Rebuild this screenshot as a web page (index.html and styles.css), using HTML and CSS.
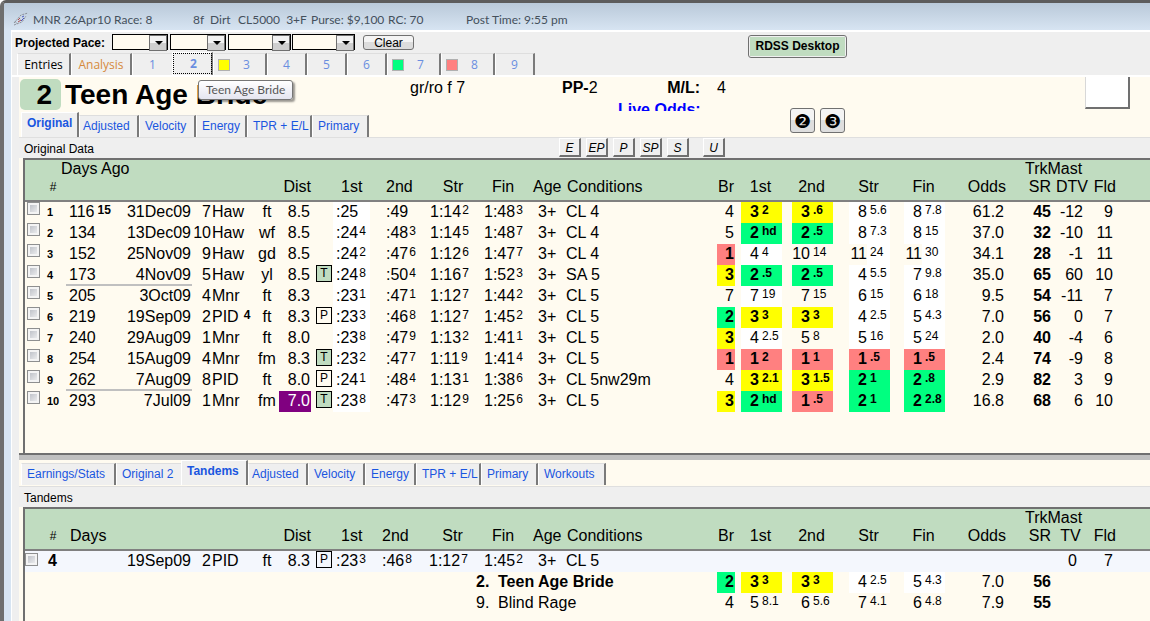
FILE: index.html
```html
<!DOCTYPE html>
<html lang="en">

<head>
  <meta charset="UTF-8">
  <meta name="viewport" content="width=device-width, initial-scale=1.0">
  <title>MNR 26Apr10 Race: 8</title>
  <link rel="stylesheet" href="styles.css">
</head>

<body>

  <div class="window">
    <header class="titlebar">
      <svg width="16" height="14" viewBox="0 0 16 14" fill="none">
        <path d="M1 11 L8 3 L15 1 M1 13 L9 10 L13 4 M2 9 L4 12" stroke="#8a8f98" stroke-dasharray="2 1" />
        <path d="M5 8 L7 6 M5 10 L8 8" stroke="#b04848" />
        <path d="M9 5 L11 4 M8 9 L11 6" stroke="#4a58c0" />
      </svg>
      <span class="race">MNR 26Apr10 Race: 8</span>
      <span class="dist">8f&nbsp; Dirt</span>
      <span class="class">CL5000&nbsp; 3+F</span>
      <span class="purse">Purse: $9,100</span>
      <span class="rc">RC: 70</span>
      <span>Post Time: 9:55 pm</span>
    </header>

    <main class="client">
      <div class="toolbar">
        <label for="pace1">Projected Pace:</label>
        <span class="pick"><select id="pace1"><option></option></select></span>
        <span class="pick"><select aria-label="Pace 2"><option></option></select></span>
        <span class="pick wide"><select aria-label="Pace 3"><option></option></select></span>
        <span class="pick wide"><select aria-label="Pace 4"><option></option></select></span>
        <button class="clear">Clear</button>
        <button class="desktop"><span>RDSS Desktop</span></button>
      </div>

      <nav class="tabs race-tabs">
        <button class="tab entries">Entries</button>
        <button class="tab analysis">Analysis</button>
        <button class="tab before">1</button>
        <div class="tip-anchor">
          <button class="tab active">2</button>
          <div class="tooltip">Teen Age Bride</div>
        </div>
        <button class="tab marked"><i class="yellow"></i>3</button>
        <button class="tab">4</button>
        <button class="tab">5</button>
        <button class="tab">6</button>
        <button class="tab marked"><i class="green"></i>7</button>
        <button class="tab marked"><i class="red"></i>8</button>
        <button class="tab">9</button>
      </nav>

      <div class="page">
        <section class="horse">
          <div class="identity">
            <h1><span class="program">2</span>Teen Age Bride</h1>
            <nav class="tabs">
              <button class="tab w-original active">Original</button>
              <button class="tab w-adjusted">Adjusted</button>
              <button class="tab w-velocity">Velocity</button>
              <button class="tab w-energy">Energy</button>
              <button class="tab w-tpr">TPR + E/L</button>
              <button class="tab w-primary">Primary</button>
            </nav>
          </div>
          <div class="facts">
            <span>gr/ro f 7</span>
            <span><b>PP-</b>2</span>
            <b class="ml">M/L:</b>
            <span class="value">4</span>
            <b class="live">Live Odds:</b>
          </div>
          <div class="lines">
            <button>❷</button>
            <button>❸</button>
          </div>
          <div class="silks"></div>
        </section>

        <div class="strip">
          <span class="name">Original Data</span>
          <button>E</button>
          <button>EP</button>
          <button>P</button>
          <button>SP</button>
          <button>S</button>
          <button class="unknown">U</button>
        </div>

        <div class="frame upper">
          <table>
            <colgroup>
              <col class="c-check"><col class="c-num"><col class="c-days"><col class="c-date"><col class="c-race">
              <col class="c-track"><col class="c-cond"><col class="c-dist"><col class="c-flag"><col class="c-t1">
              <col class="c-t2"><col class="c-t3"><col class="c-t4"><col class="c-age"><col class="c-class">
              <col class="c-br"><col class="c-p1"><col class="c-p2"><col class="c-p3"><col class="c-p4">
              <col class="c-odds"><col class="c-sr"><col class="c-dtv"><col class="c-fld"><col>
            </colgroup>
            <thead>
              <tr class="top">
                <th></th>
                <th colspan="3" class="ago">Days Ago</th>
                <th colspan="17"></th>
                <th colspan="2" class="trk">TrkMast</th>
                <th colspan="2"></th>
              </tr>
              <tr class="names">
                <th></th>
                <th class="hash">#</th>
                <th></th>
                <th></th>
                <th></th>
                <th></th>
                <th></th>
                <th class="right">Dist</th>
                <th></th>
                <th class="t1">1st</th>
                <th class="t2">2nd</th>
                <th>Str</th>
                <th>Fin</th>
                <th class="age">Age</th>
                <th class="class">Conditions</th>
                <th class="br">Br</th>
                <th><span>1st</span></th>
                <th><span>2nd</span></th>
                <th><span>Str</span></th>
                <th><span>Fin</span></th>
                <th class="right">Odds</th>
                <th class="sr">SR</th>
                <th class="right">DTV</th>
                <th class="right">Fld</th>
                <th></th>
              </tr>
            </thead>
            <tbody id="originalRows"></tbody>
          </table>
        </div>

        <div class="splitter"></div>

        <nav class="tabs lower-tabs">
          <button class="tab w-earnings">Earnings/Stats</button>
          <button class="tab w-tpr before">Original 2</button>
          <button class="tab w-tandems active">Tandems</button>
          <button class="tab w-adjusted">Adjusted</button>
          <button class="tab w-velocity">Velocity</button>
          <button class="tab w-energy">Energy</button>
          <button class="tab w-tpr">TPR + E/L</button>
          <button class="tab w-primary">Primary</button>
          <button class="tab w-workouts">Workouts</button>
        </nav>

        <div class="strip">
          <span class="name">Tandems</span>
        </div>

        <div class="frame lower">
          <table>
            <colgroup>
              <col class="c-check"><col class="c-num"><col class="c-days"><col class="c-date"><col class="c-race">
              <col class="c-track"><col class="c-cond"><col class="c-dist"><col class="c-flag"><col class="c-t1">
              <col class="c-t2"><col class="c-t3"><col class="c-t4"><col class="c-age"><col class="c-class">
              <col class="c-br"><col class="c-p1"><col class="c-p2"><col class="c-p3"><col class="c-p4">
              <col class="c-odds"><col class="c-sr"><col class="c-dtv"><col class="c-fld"><col>
            </colgroup>
            <thead>
              <tr class="top">
                <th colspan="21"></th>
                <th colspan="2" class="trk">TrkMast</th>
                <th colspan="2"></th>
              </tr>
              <tr class="names">
                <th></th>
                <th class="hash">#</th>
                <th class="days">Days</th>
                <th></th>
                <th></th>
                <th></th>
                <th></th>
                <th class="right">Dist</th>
                <th></th>
                <th class="t1">1st</th>
                <th class="t2">2nd</th>
                <th>Str</th>
                <th>Fin</th>
                <th class="age">Age</th>
                <th class="class">Conditions</th>
                <th class="br">Br</th>
                <th><span>1st</span></th>
                <th><span>2nd</span></th>
                <th><span>Str</span></th>
                <th><span>Fin</span></th>
                <th class="right">Odds</th>
                <th class="sr">SR</th>
                <th>TV</th>
                <th class="right">Fld</th>
                <th></th>
              </tr>
            </thead>
            <tbody id="tandemRows"></tbody>
          </table>
        </div>
      </div>
    </main>
  </div>

  <script src="script.js"></script>

</body>

</html>
```

FILE: styles.css
```css
* {
  box-sizing: border-box;
}

body {
  margin: 0;
  font-family: "Liberation Sans", Arial, sans-serif;
  font-size: 16px;
  color: #000;
}

button {
  font-family: inherit;
  font-size: 12px;
  padding: 0;
  margin: 0;
  color: #000;
}

/* window frame */

.window {
  display: flex;
  flex-direction: column;
  height: 100vh;
  overflow: hidden;
  border-top: 3px solid #5c5c5c;
  border-left: 4px solid #6e6e6e;
  border-top-left-radius: 6px;
  background: #d7e4f2;
}

.titlebar {
  display: flex;
  align-items: center;
  flex: none;
  height: 27px;
  padding: 5px 0 0 9px;
  background: linear-gradient(#b9c9d9, #d7e4f2);
  font-family: Lato, "Open Sans", sans-serif;
  font-size: 12px;
  color: #44505c;
  white-space: nowrap;
}

.race {
  width: 160px;
  margin-left: 4px;
}

.titlebar .dist {
  width: 45px;
}

.titlebar .class {
  width: 73px;
}

.purse {
  width: 77px;
}

.rc {
  width: 78px;
}

.client {
  display: flex;
  flex-direction: column;
  flex: 1;
  min-height: 0;
  margin-left: 7px;
  border-top: 2px solid #fff;
  border-left: 1px solid #fff;
  background: #efefef;
}

/* toolbar */

.toolbar {
  display: flex;
  align-items: flex-start;
  flex: none;
  height: 20px;
  padding: 2px 0 0 3px;
}

.toolbar label {
  width: 97px;
  font-size: 12px;
  font-weight: bold;
  line-height: 18px;
}

.pick {
  position: relative;
  width: 56px;
  height: 16px;
  margin-right: 2px;
}

.pick.wide {
  width: 63px;
  margin-right: 1px;
}

.pick select {
  display: block;
  width: 100%;
  height: 16px;
  border: 1px solid #000;
  border-radius: 0;
  background: #fffbf0;
  appearance: none;
}

.pick::before {
  content: "";
  position: absolute;
  top: 1px;
  right: 1px;
  width: 16px;
  height: 14px;
  border: 1px solid #707070;
  background: linear-gradient(#f2f2f2 50%, #cfcfcf 50%);
  pointer-events: none;
}

.pick::after {
  content: "";
  position: absolute;
  top: 7px;
  right: 5px;
  border: 4px solid transparent;
  border-top-color: #000;
  border-bottom: none;
  pointer-events: none;
}

.clear {
  width: 51px;
  height: 15px;
  margin: 1px 0 0 7px;
  border: 1px solid #707070;
  border-radius: 3px;
  background: linear-gradient(#f4f4f4 50%, #dcdcdc 50%);
  line-height: 14px;
}

.desktop {
  width: 99px;
  height: 23px;
  margin: 1px 0 0 334px;
  padding: 1px;
  border: 1px solid #707070;
  border-radius: 3px;
  background: #f0f0f0;
  font-weight: bold;
}

.desktop span {
  display: block;
  background: #c0dcc0;
  line-height: 19px;
}

/* tabs */

.tabs {
  display: flex;
  align-items: flex-end;
  flex: none;
}

.tab {
  flex: none;
  height: 22px;
  padding: 0 0 2px 5px;
  border: 0 solid #7a7a7a;
  border-top: 1px solid #dedede;
  border-left: 1px solid #fff;
  border-right: 2px solid #7a7a7a;
  background: #efefef;
  color: #1a56e0;
  font-size: 12px;
  text-align: left;
  white-space: nowrap;
}

.tab.before {
  border-right-width: 0;
}

.tab.active {
  height: 25px;
  padding-bottom: 4px;
  border-top-color: #fff;
  font-weight: bold;
}

.race-tabs {
  height: 25px;
  padding-left: 5px;
  border-bottom: 2px solid #fff;
}

.race-tabs .tab {
  width: 40px;
  padding: 0;
  color: #6a8ee0;
  font-family: "Open Sans", "Noto Sans", sans-serif;
  text-align: center;
}

.race-tabs .entries {
  width: 54px;
  color: #000;
}

.race-tabs .analysis {
  width: 61px;
  color: #d68a3c;
}

.race-tabs .marked {
  display: flex;
  align-items: center;
  width: 54px;
  padding-left: 4px;
}

.marked i {
  width: 12px;
  height: 12px;
  margin-right: 13px;
  border: 1px solid #b0b0b0;
}

.race-tabs .active {
  width: 41px;
  height: 23px;
  padding: 0 0 2px 3px;
  outline: 1px dotted #000;
  outline-offset: -2px;
}

.tip-anchor {
  position: relative;
  display: flex;
}

.tooltip {
  position: absolute;
  z-index: 2;
  top: 28px;
  left: 26px;
  padding: 0 7px;
  border: 1px solid #767676;
  border-radius: 3px;
  background: linear-gradient(#fff, #e4e5f0);
  box-shadow: 2px 2px 2px rgba(0, 0, 0, 0.4);
  color: #575757;
  font-family: Lato, "Open Sans", sans-serif;
  font-size: 12px;
  line-height: 18px;
  white-space: nowrap;
}

.w-original {
  width: 58px;
}

.w-adjusted {
  width: 60px;
  padding-left: 3px;
}

.w-velocity {
  width: 57px;
}

.w-energy {
  width: 51px;
}

.w-tpr {
  width: 65px;
}

.w-primary {
  width: 57px;
}

.w-earnings {
  width: 95px;
}

.w-tandems {
  width: 67px;
}

.w-workouts {
  width: 68px;
}

/* horse */

.page {
  display: flex;
  flex-direction: column;
  flex: 1;
  min-height: 0;
  margin-left: 7px;
  background: #fffbf0;
}

.horse {
  display: flex;
  flex: none;
  height: 60px;
}

.identity {
  display: flex;
  flex-direction: column;
  justify-content: space-between;
  width: 391px;
  padding: 2px 0 0 1px;
}

h1 {
  display: flex;
  align-items: center;
  height: 31px;
  margin: 0;
  font-size: 28px;
}

.program {
  width: 41px;
  margin-right: 4px;
  padding-right: 9px;
  border-radius: 5px;
  background: #c0dcc0;
  line-height: 31px;
  text-align: right;
}

.facts {
  display: grid;
  grid-template-columns: 152px 56px 82px 90px;
  grid-template-rows: 18px 10px;
  row-gap: 4px;
  padding-top: 2px;
  line-height: 18px;
  white-space: nowrap;
}

.ml {
  text-align: right;
}

.value {
  padding-left: 17px;
}

.live {
  grid-column: 3 / 5;
  overflow: hidden;
  color: #0000ff;
}

.lines {
  display: flex;
  gap: 5px;
  padding-top: 31px;
}

.lines button {
  width: 25px;
  height: 25px;
  border: 1px solid #707070;
  border-radius: 3px;
  background: linear-gradient(#f4f4f4 50%, #dedede 50%);
  font-family: "DejaVu Sans", sans-serif;
  font-size: 19px;
  line-height: 20px;
}

.silks {
  width: 45px;
  height: 32px;
  margin: 0 20px 0 auto;
  border: 1px solid #d8d8d8;
  border-top: 0;
  border-right: 2px solid #707070;
  border-bottom: 2px solid #707070;
  background: #fff;
}

.strip {
  display: flex;
  align-items: flex-start;
  flex: none;
  gap: 5px;
  height: 21px;
  border-top: 1px solid #dfdfdf;
  background: #efefef;
  font-size: 12px;
}

.strip .name {
  width: 535px;
  padding-left: 5px;
  line-height: 22px;
}

.strip button {
  width: 22px;
  height: 19px;
  padding-top: 1px;
  border: 1px solid #fff;
  border-right: 2px solid #707070;
  border-bottom: 2px solid #707070;
  background: #efefef;
  font-style: italic;
  line-height: 16px;
}

.strip .unknown {
  margin-left: 9px;
}

/* data grids */

.frame {
  margin-left: 4px;
  border-top: 2px solid #707070;
  border-left: 2px solid #707070;
}

.upper {
  flex: none;
  padding-bottom: 41px;
}

.lower {
  flex: 1;
}

table {
  width: 100%;
  table-layout: fixed;
  border-collapse: separate;
  border-spacing: 0;
}

.c-check { width: 21px; }
.c-num { width: 20px; }
.c-days { width: 48px; }
.c-date { width: 78px; }
.c-race { width: 20px; }
.c-track { width: 43px; }
.c-cond { width: 24px; }
.c-dist { width: 32px; }
.c-flag { width: 22px; }
.c-t1 { width: 37px; }
.c-t2 { width: 60px; }
.c-t3 { width: 46px; }
.c-t4 { width: 54px; }
.c-age { width: 32px; }
.c-class { width: 155px; }
.c-br { width: 18px; }
.c-p1 { width: 47px; }
.c-p2 { width: 51px; }
.c-p3 { width: 57px; }
.c-p4 { width: 55px; }
.c-odds { width: 61px; }
.c-sr { width: 47px; }
.c-dtv { width: 35px; }
.c-fld { width: 28px; }

.lower .c-t1 { width: 33px; }
.lower .c-t2 { width: 63px; }
.lower .c-t3 { width: 47px; }

th {
  height: 18px;
  padding: 0;
  background: #c0dcc0;
  font-weight: normal;
  line-height: 18px;
  vertical-align: top;
  white-space: nowrap;
}

.names th {
  height: 24px;
  border-bottom: 2px solid #808080;
}

th span {
  display: block;
  width: 41px;
  margin-left: auto;
  padding-right: 2px;
}

td {
  height: 21px;
  padding: 0;
  line-height: 20px;
  vertical-align: top;
  white-space: nowrap;
}

.right,
.date,
.race-no {
  text-align: right;
}

th.ago {
  padding-left: 15px;
  text-align: left;
}

th.trk {
  padding-left: 19px;
  text-align: left;
}

.names .hash {
  padding-right: 6px;
  font-size: 12px;
}

.names .days {
  padding-left: 4px;
  text-align: left;
}

.names .t1 {
  padding-left: 8px;
  text-align: left;
}

.names .age {
  padding-left: 3px;
  text-align: left;
}

.names .class {
  padding-left: 5px;
  text-align: left;
}

.t2 {
  padding-left: 16px;
  text-align: left;
}

.br {
  padding-right: 1px;
  text-align: right;
}

.sr {
  padding-right: 2px;
  text-align: right;
}

.num {
  padding-left: 1px;
  font-size: 11px;
  font-weight: bold;
}

.lower .num {
  padding-left: 2px;
  font-size: 16px;
}

td.days {
  padding-left: 3px;
}

td.date {
  padding-right: 1px;
}

td.race-no {
  padding-right: 1px;
}

td.surface {
  text-align: center;
}

td.dist {
  padding-right: 1px;
  text-align: right;
}

td.t1 {
  padding-left: 3px;
}

.upper td.t1 {
  background: #fff;
}

td.t4 {
  padding-left: 8px;
}

td.age {
  padding-left: 8px;
}

td.class {
  padding-left: 4px;
}

td.odds {
  padding-right: 2px;
  text-align: right;
}

td.sr {
  font-weight: bold;
}

td.dtv {
  padding-right: 5px;
  text-align: right;
}

.lower td.dtv {
  padding-right: 11px;
}

td.fld {
  padding-right: 3px;
  text-align: right;
}

.break .days,
.break .date {
  border-bottom: 2px solid #c0c0c0;
  line-height: 19px;
}

sup {
  margin-left: 1px;
  font-size: 12px;
  line-height: 12px;
  vertical-align: 3px;
}

.days sup,
.track sup {
  margin-left: 3px;
  font-weight: bold;
}

.track sup {
  margin-left: 5px;
}

input[type="checkbox"] {
  display: block;
  width: 13px;
  height: 13px;
  margin: 0 0 0 2px;
  border: 1px solid #8e8f8f;
  background: linear-gradient(135deg, #b4b8c0, #f6f6f6);
  box-shadow: inset 0 0 0 2px #f4f4f4;
  appearance: none;
}

.lower input[type="checkbox"] {
  margin: 2px 0 0;
}

.flag {
  display: block;
  width: 16px;
  height: 17px;
  margin-left: 5px;
  border: 1px solid #000;
  font-size: 12px;
  line-height: 15px;
  text-align: center;
}

.flag.turf {
  background: #c0dcc0;
}

.call {
  width: 41px;
  height: 21px;
  margin-left: auto;
}

.call span {
  display: inline-block;
  width: 18px;
  height: 21px;
  text-align: right;
  vertical-align: top;
}

.call sup {
  margin-left: 3px;
}

.white {
  background: #fff;
}

.far span {
  background: #fffbf0;
}

.yellow,
.green,
.red {
  font-weight: bold;
}

.yellow {
  background: #ffff00;
}

.green {
  background: #00ff80;
}

.red {
  background: #ff8080;
}

.purple {
  background: #800080;
  color: #fff;
}

.tandem {
  background: #f4f7fd;
}

.entry span {
  display: inline-block;
  width: 22px;
}

.own .entry {
  font-weight: bold;
}

.splitter {
  flex: none;
  height: 7px;
  border-top: 2px solid #707070;
  background: #c0c0c0;
}

.lower-tabs {
  height: 26px;
  padding: 0 0 1px 2px;
}

.identity .tabs {
  padding-left: 1px;
}
```

FILE: script.js
```javascript
// calls are "colour position margin": y, g, r = highlighted, w = white, - = plain
const races = [
  ['116^15', '31Dec09', '7', 'Haw', 'ft', '8.5', '', ':25', ':49', '1:14^2', '1:48^3', 'CL 4', '- 4', 'y 3 2', 'y 3 .6', 'w 8 5.6', 'w 8 7.8', '61.2', '45', '-12', '9'],
  ['134', '13Dec09', '10', 'Haw', 'wf', '8.5', '', ':24^4', ':48^3', '1:14^5', '1:48^7', 'CL 4', '- 5', 'g 2 hd', 'g 2 .5', 'w 8 7.3', 'w 8 15', '37.0', '32', '-10', '11'],
  ['152', '25Nov09', '9', 'Haw', 'gd', '8.5', '', ':24^2', ':47^6', '1:12^6', '1:47^7', 'CL 4', 'r 1', 'w 4 4', '- 10 14', 'f 11 24', 'f 11 30', '34.1', '28', '-1', '11'],
  ['173', '4Nov09', '5', 'Haw', 'yl', '8.5', 'T', ':24^8', ':50^4', '1:16^7', '1:52^3', 'SA 5', 'y 3', 'g 2 .5', 'g 2 .5', 'w 4 5.5', 'w 7 9.8', '35.0', '65', '60', '10'],
  ['205', '3Oct09', '4', 'Mnr', 'ft', '8.3', '', ':23^1', ':47^1', '1:12^7', '1:44^2', 'CL 5', '- 7', 'w 7 19', '- 7 15', 'w 6 15', 'w 6 18', '9.5', '54', '-11', '7'],
  ['219', '19Sep09', '2', 'PID^4', 'ft', '8.3', 'P', ':23^3', ':46^8', '1:12^7', '1:45^2', 'CL 5', 'g 2', 'y 3 3', 'y 3 3', 'w 4 2.5', 'w 5 4.3', '7.0', '56', '0', '7'],
  ['240', '29Aug09', '1', 'Mnr', 'ft', '8.0', '', ':23^8', ':47^9', '1:13^2', '1:41^1', 'CL 5', 'y 3', 'w 4 2.5', '- 5 8', 'w 5 16', 'w 5 24', '2.0', '40', '-4', '6'],
  ['254', '15Aug09', '4', 'Mnr', 'fm', '8.3', 'T', ':23^2', ':47^7', '1:11^9', '1:41^4', 'CL 5', 'r 1', 'r 1 2', 'r 1 1', 'r 1 .5', 'r 1 .5', '2.4', '74', '-9', '8'],
  ['262', '7Aug09', '8', 'PID', 'ft', '8.0', 'P', ':24^1', ':48^4', '1:13^1', '1:38^6', 'CL 5nw29m', '- 4', 'y 3 2.1', 'y 3 1.5', 'g 2 1', 'g 2 .8', '2.9', '82', '3', '9'],
  ['293', '7Jul09', '1', 'Mnr', 'fm', '7.0', 'T', ':23^8', ':47^3', '1:12^9', '1:25^6', 'CL 5', 'y 3', 'g 2 hd', 'r 1 .5', 'g 2 1', 'g 2 2.8', '16.8', '68', '6', '10']
];

const tandem = ['', '19Sep09', '2', 'PID', 'ft', '8.3', 'P', ':23^3', ':46^8', '1:12^7', '1:45^2', 'CL 5', '', '', '', '', '', '', '', '0', '7'];

const entries = [
  ['2.', 'Teen Age Bride', 'g 2', 'y 3 3', 'y 3 3', 'w 4 2.5', 'w 5 4.3', '7.0', '56'],
  ['9.', 'Blind Rage', '- 4', '- 5 8.1', '- 6 5.6', '- 7 4.1', '- 6 4.8', '7.9', '55']
];

const colours = { y: 'yellow', g: 'green', r: 'red', w: 'white', f: 'white far' };

const fraction = (text) => text.replace(/\^(.+)/, '<sup>$1</sup>');

const callCell = (text) => {
  if (!text) return '<td></td>';
  const [colour, position, margin] = text.split(' ');
  return `<td><div class="call ${colours[colour] || ''}"><span>${position}</span><sup>${margin}</sup></div></td>`;
};

const breakCell = (text) => {
  const [colour, position] = text.split(' ');
  return `<td class="br ${colours[colour] || ''}">${position || ''}</td>`;
};

const flagCell = (flag) =>
  flag ? `<td><span class="flag ${flag === 'T' ? 'turf' : ''}">${flag}</span></td>` : '<td></td>';

const raceRow = (r, num, rowClass) => `
  <tr class="${rowClass}">
    <td><input type="checkbox" aria-label="Select race ${num}"></td>
    <td class="num">${num}</td>
    <td class="days">${fraction(r[0])}</td>
    <td class="date">${r[1]}</td>
    <td class="race-no">${r[2]}</td>
    <td class="track">${fraction(r[3])}</td>
    <td class="surface">${r[4]}</td>
    <td class="dist ${r[5] === '7.0' ? 'purple' : ''}">${r[5]}</td>
    ${flagCell(r[6])}
    <td class="t1">${fraction(r[7])}</td>
    <td class="t2">${fraction(r[8])}</td>
    <td>${fraction(r[9])}</td>
    <td class="t4">${fraction(r[10])}</td>
    <td class="age">3+</td>
    <td class="class">${r[11]}</td>
    ${breakCell(r[12])}
    ${r.slice(13, 17).map(callCell).join('')}
    <td class="odds">${r[17]}</td>
    <td class="sr">${r[18]}</td>
    <td class="dtv">${r[19]}</td>
    <td class="fld">${r[20]}</td>
    <td></td>
  </tr>`;

const entryRow = (e, i) => `
  <tr class="${i === 0 ? 'own' : ''}">
    <td colspan="12"></td>
    <td colspan="3" class="entry"><span>${e[0]}</span>${e[1]}</td>
    ${breakCell(e[2])}
    ${e.slice(3, 7).map(callCell).join('')}
    <td class="odds">${e[7]}</td>
    <td class="sr">${e[8]}</td>
    <td colspan="3"></td>
  </tr>`;

document.getElementById('originalRows').innerHTML =
  races.map((r, i) => raceRow(r, i + 1, i === 3 || i === 8 ? 'break' : '')).join('');

document.getElementById('tandemRows').innerHTML =
  raceRow(tandem, 4, 'tandem') + entries.map(entryRow).join('');
```
